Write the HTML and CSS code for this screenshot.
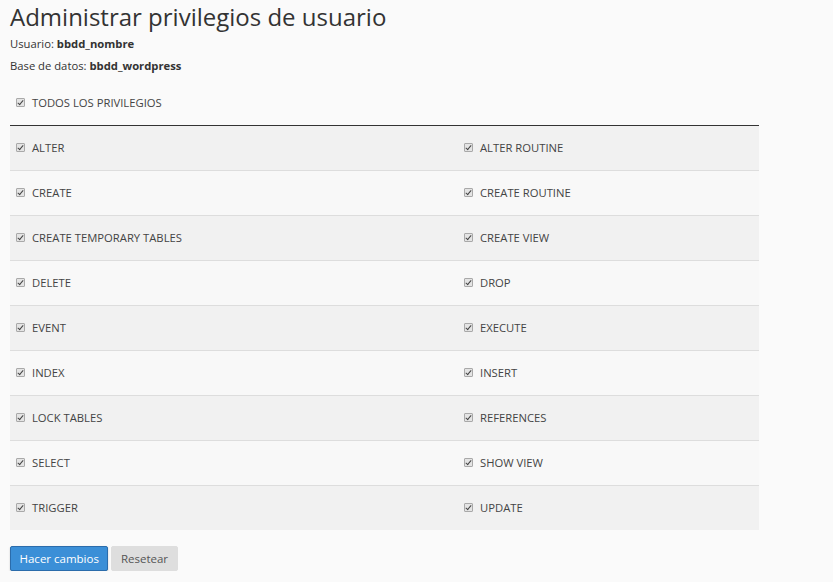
FILE: index.html
```html
<!DOCTYPE html>
<html lang="es">
<head>
    <meta charset="UTF-8">
    <meta name="viewport" content="width=device-width, initial-scale=1.0">
    <title>Administrar privilegios de usuario</title>
    <link rel="stylesheet" href="styles.css">
</head>
<body>

    <h1 class="title">Administrar privilegios de usuario</h1>
    <p class="info">Usuario: <b>bbdd_nombre</b></p>
    <p class="info">Base de datos: <b>bbdd_wordpress</b></p>

    <div class="all">
        <label class="priv"><span class="chk"></span>TODOS LOS PRIVILEGIOS</label>
    </div>

    <!-- dos columnas, filas alternas -->
    <div class="privs">
        <div class="row">
            <label class="priv"><span class="chk"></span>ALTER</label>
            <label class="priv"><span class="chk"></span>ALTER ROUTINE</label>
        </div>
        <div class="row">
            <label class="priv"><span class="chk"></span>CREATE</label>
            <label class="priv"><span class="chk"></span>CREATE ROUTINE</label>
        </div>
        <div class="row">
            <label class="priv"><span class="chk"></span>CREATE TEMPORARY TABLES</label>
            <label class="priv"><span class="chk"></span>CREATE VIEW</label>
        </div>
        <div class="row">
            <label class="priv"><span class="chk"></span>DELETE</label>
            <label class="priv"><span class="chk"></span>DROP</label>
        </div>
        <div class="row">
            <label class="priv"><span class="chk"></span>EVENT</label>
            <label class="priv"><span class="chk"></span>EXECUTE</label>
        </div>
        <div class="row">
            <label class="priv"><span class="chk"></span>INDEX</label>
            <label class="priv"><span class="chk"></span>INSERT</label>
        </div>
        <div class="row">
            <label class="priv"><span class="chk"></span>LOCK TABLES</label>
            <label class="priv"><span class="chk"></span>REFERENCES</label>
        </div>
        <div class="row">
            <label class="priv"><span class="chk"></span>SELECT</label>
            <label class="priv"><span class="chk"></span>SHOW VIEW</label>
        </div>
        <div class="row">
            <label class="priv"><span class="chk"></span>TRIGGER</label>
            <label class="priv"><span class="chk"></span>UPDATE</label>
        </div>
    </div>

    <div class="actions">
        <button class="btn btn-primary">Hacer cambios</button>
        <button class="btn">Resetear</button>
    </div>

</body>
</html>
```

FILE: styles.css
```css
*{
    box-sizing: border-box;
}

body{
    margin: 0;
    padding: 0 10px;
    background-color: #fafafa;
    color: #333;
    font-family: "Open Sans", "Liberation Sans", sans-serif;
    font-size: 11.25px;
}

.title{
    margin: 0;
    padding-top: 1px;
    font-size: 24px;
    font-weight: 400;
    line-height: 32px;
    color: #333;
}

.info{
    margin: 0;
    line-height: 22px;
    color: #333;
}

.info b{
    font-weight: 700;
}

/* fila de "todos" sobre la linea oscura */
.all{
    width: 749px;
    height: 47px;
    margin-top: 2px;
    display: flex;
    align-items: center;
    border-bottom: 1px solid #333;
}

.privs{
    width: 749px;
}

.row{
    display: grid;
    grid-template-columns: 448px 301px;
    height: 45px;
    border-bottom: 1px solid #ddd;
    background-color: #f8f8f8;
}

.row:nth-child(odd){
    background-color: #f1f1f1;
}

.row:last-child{
    border-bottom: 0;
    height: 44px;
}

.priv{
    display: flex;
    align-items: center;
    padding-left: 6px;
    color: #444;
}

.row .priv{
    padding-bottom: 2px;
}

/* checkbox marcado deshabilitado */
.chk{
    position: relative;
    width: 9px;
    height: 9px;
    margin-right: 7px;
    border: 1px solid #a9a9a9;
    border-radius: 1px;
    background-color: #e4e4e4;
}

.chk::after{
    content: "";
    position: absolute;
    left: 2px;
    top: 0;
    width: 2px;
    height: 5px;
    border: solid #444;
    border-width: 0 1.5px 1.5px 0;
    transform: rotate(40deg);
}

.actions{
    display: flex;
    gap: 3px;
    margin-top: 16px;
}

.btn{
    height: 25px;
    padding: 0 8.5px;
    border: 1px solid #dedede;
    border-radius: 2px;
    background-color: #dedede;
    color: #555;
    font-family: inherit;
    font-size: 11.5px;
}

.btn-primary{
    background-color: #3b8fd7;
    border-color: #2b6cab;
    color: #fff;
    box-shadow: 0 1px 2px rgba(0, 0, 0, 0.2);
}
```
